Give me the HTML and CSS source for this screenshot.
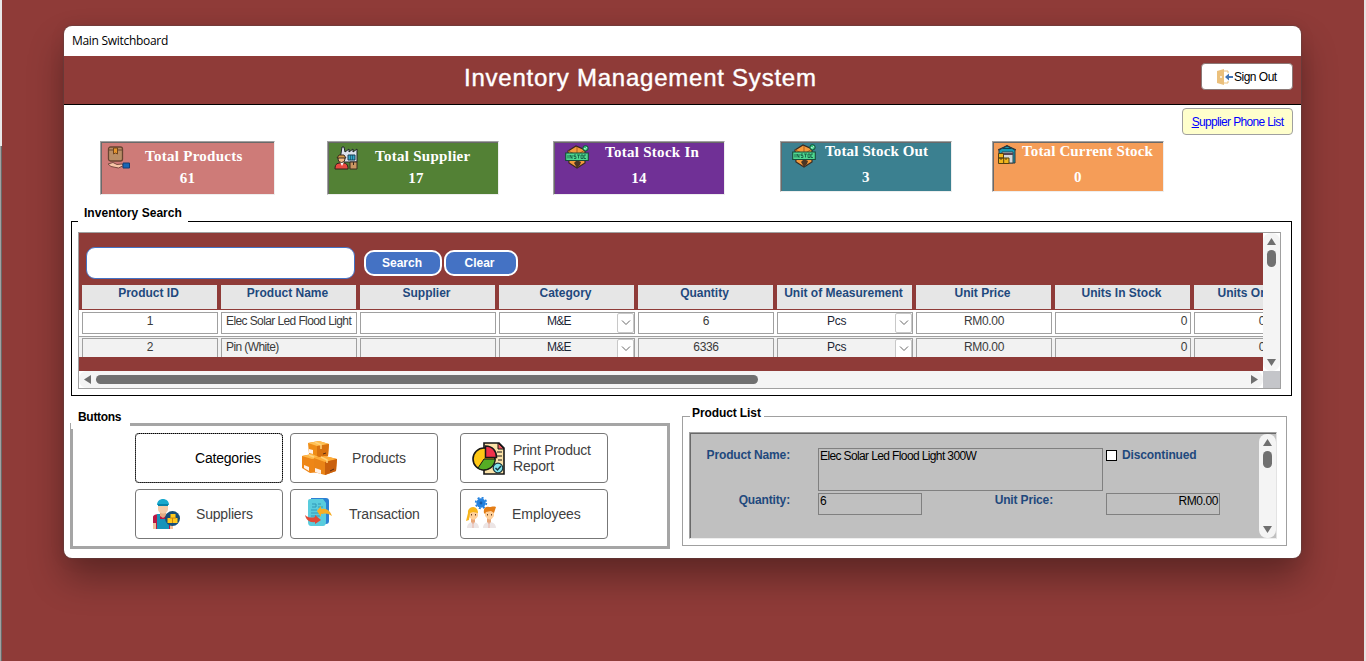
FILE: index.html
```html
<!DOCTYPE html>
<html lang="en">
<head>
<meta charset="utf-8">
<title>Main Switchboard</title>
<link rel="stylesheet" href="styles.css">
</head>
<body>
<svg class="defs" width="0" height="0">
  <symbol id="stock" viewBox="0 0 24 24">
    <path d="M3 6 11 1l9 4v13l-8 5-8-5z" fill="#f49a3c" stroke="#3a2a20" stroke-width="1.2"/>
    <path d="M3 6l9 4 8-5M12 2v6" fill="none" stroke="#a95f1e"/>
    <path d="M9 18l3-3 4 2-1 3-3 3z" fill="#4a3524"/>
    <path d="M.7 8h22.6v7.5H.7z" fill="#4fd890" stroke="#174a39" stroke-width="1.1"/>
    <path d="M3 10v3.500M5 13.500V10l2 3.500V10M11 10H9v1.600h2v1.900H9M12 10h3m-1.500 0v3.500M16 10h2v3.500h-2zM21 10h-2v3.500h2" fill="none" stroke="#12503c" stroke-width=".8"/>
    <circle cx="20.500" cy="3.300" r="2.700" fill="#2fc57b" stroke="#174a39"/>
    <path d="M19 3l1.200 1.400L22 2" fill="none" stroke="#fff" stroke-width=".7"/>
  </symbol>
</svg>
<div class="desktop">
<div class="edge-left"><i></i><b></b></div>
<main class="window">
  <div class="titlebar"><span>Main Switchboard</span></div>
  <header class="banner">
    <h1>Inventory Management System</h1>
    <button class="signout"><svg width="16" height="16" viewBox="0 0 16 16"><path d="M0 2 7 0v16l-7-2z" fill="#ebc07c"/><circle cx="4" cy="8" r=".9" fill="#fff"/><path d="M7 2h4v2M7 14h4v-2" fill="none" stroke="#ebc07c"/><path d="M16 8h-5" stroke="#3f73b5" stroke-width="2"/><path d="M8 8l4-3.500v7z" fill="#3f73b5"/></svg><span>Sign Out</span></button>
  </header>
  <div class="linkrow"><button class="phone"><span><u>S</u>upplier Phone List</span></button></div>

  <section class="cards">
    <article class="card products"><svg width="24" height="24" viewBox="0 0 24 24"><rect x="1.500" y="1" width="14" height="14" rx="2" fill="#b98e67" stroke="#684431" stroke-width="1.300"/><path d="M2 4h13" stroke="#684431"/><path d="M6.500 2h4v6l-2-1-2 1z" fill="#e5962e" stroke="#70451d"/><path d="M1 18l5-1.500 4 2 5-.5 1.500 1.500-5 2.500L4 20.500z" fill="#f7c5a6" stroke="#7a4b42"/><path d="M16 17h6.500v5H16z" fill="#1766b5" stroke="#173d72"/></svg><h2>Total Products</h2><p>61</p></article>
    <article class="card supplier"><svg width="24" height="24" viewBox="0 0 24 24"><path d="M6 14l2-13h2l1 5 4-3v3l4-3v3l4-3v13H7z" fill="#dce2ec" stroke="#20242b"/><path d="M14 9h7v5h-7z" fill="#33a7c9" stroke="#163f54"/><path d="M16.500 9v5m2-5v5" stroke="#163f54" stroke-width=".6"/><path d="M1 23c0-6 3-6 7-6s6 1 6 6z" fill="#e84b41" stroke="#30201c"/><path d="M6 16l2 4 2-4z" fill="#fff"/><circle cx="7.500" cy="13" r="3.500" fill="#f2bd86" stroke="#3b2b20"/><path d="M3 12h9l-2-3H5z" fill="#d49a48" stroke="#3b2b20"/><path d="M16 16h7v7h-7z" fill="#c99562" stroke="#3b2b20"/><path d="M19.500 16v3" stroke="#3b2b20"/></svg><h2>Total Supplier</h2><p>17</p></article>
    <article class="card stockin"><svg width="24" height="24"><use href="#stock"/></svg><h2>Total Stock In</h2><p>14</p></article>
    <article class="card stockout"><svg width="24" height="24"><use href="#stock"/></svg><h2>Total Stock Out</h2><p>3</p></article>
    <article class="card current"><svg width="18" height="19" viewBox="0 0 18 19"><path d="M1 5l8-4.500L17 5v13H1z" fill="#179bb5" stroke="#2b3840"/><path d="M0 5 9 1l9 4" fill="none" stroke="#2b3840" stroke-width="1.300"/><path d="M5 3.500h8" stroke="#103f50"/><path d="M4 7h11v11H4z" fill="#d6d9da" stroke="#394548"/><path d="M5 9h10" stroke="#545" stroke-width="2"/><path d="M.5 13h10.500v5.500H.5zM.5 8.500h5V13h-5z" fill="#f1b51d" stroke="#55400f"/><path d="M5.700 13v5.500M3 13v2m5-2v2" stroke="#55400f"/></svg><h2>Total Current Stock</h2><p>0</p></article>
  </section>

  <section class="frame search-frame">
    <span class="legend">Inventory Search</span>
    <div class="subform">
      <div class="sheet">
        <div class="tools"><input type="text" aria-label="Search text"><button class="pill p1">Search</button><button class="pill p2">Clear</button></div>
        <div class="grid heads"><b>Product ID</b><b>Product Name</b><b>Supplier</b><b>Category</b><b>Quantity</b><b>Unit of Measurement</b><b>Unit Price</b><b>Units In Stock</b><b>Units On Order</b></div>
        <div class="grid row"><span>1</span><span class="name">Elec Solar Led Flood Light</span><span></span><span class="combo">M&amp;E<i><svg width="10" height="6"><path d="M1 .5l4 4 4-4"/></svg></i></span><span>6</span><span class="combo">Pcs<i><svg width="10" height="6"><path d="M1 .5l4 4 4-4"/></svg></i></span><span class="price">RM0.00</span><span class="num">0</span><span class="cut">0</span></div>
        <div class="grid row alt"><span>2</span><span class="name">Pin (White)</span><span></span><span class="combo">M&amp;E<i><svg width="10" height="6"><path d="M1 .5l4 4 4-4"/></svg></i></span><span>6336</span><span class="combo">Pcs<i><svg width="10" height="6"><path d="M1 .5l4 4 4-4"/></svg></i></span><span class="price">RM0.00</span><span class="num">0</span><span class="cut">0</span></div>
      </div>
      <div class="vbar"><svg class="arrow" width="9" height="7"><path d="M4.500 0 9 7H0z"/></svg><div class="vthumb"></div><svg class="arrow end" width="9" height="7"><path d="M0 0h9L4.500 7z"/></svg></div>
      <div class="hbar"><svg class="arrow" width="7" height="9"><path d="M7 0v9L0 4.500z"/></svg><div class="hthumb"></div><svg class="arrow end" width="7" height="9"><path d="M0 0v9l7-4.500z"/></svg></div>
      <div class="corner"></div>
    </div>
  </section>

  <div class="lower">
    <section class="frame button-frame">
      <span class="legend">Buttons</span>
      <div class="buttons">
        <button class="tile focus"><span>Categories</span></button>
        <button class="tile prod"><svg width="36" height="36" viewBox="0 0 36 36"><path d="M7 3 18 1l10 3-1 12-11 2-8-4z" fill="#ef8d17"/><path d="M7 3l9 3 12-2-10-3z" fill="#ffc052"/><path d="M16 6v12l11-2 1-12z" fill="#d8720f"/><path d="M1 16l10-2 9 4v14L9 33l-8-5z" fill="#ee8616"/><path d="M1 16l10 3 9-1-9-4z" fill="#ffb94a"/><path d="M13 18l11-2 12 3-1 12-11 4-11-3z" fill="#ea8416"/><path d="M13 18l11 4 12-3-12-3z" fill="#ffae3a"/><path d="M24 22v13l11-4 1-12z" fill="#c9600d"/><path d="M8 9l4 1v4l-4-1zM3 25l5 2v4l-5-3zM14 28l6 2v4l-6-2z" fill="#fff1e7"/><path d="M14 2l6 3v4M8 15l5 2M20 17l6 3v3" fill="none" stroke="#ffd27b" stroke-width="1.500"/><path d="M29 31l4-2M22 14l3-1" stroke="#592c15"/></svg><span>Products</span></button>
        <button class="tile print"><svg width="34" height="33" viewBox="0 0 34 33"><path d="M12 1h15l5 5v26H12z" fill="#fbe2a8" stroke="#171717" stroke-width="1.600"/><path d="M26 1v6h6z" fill="#ef5960" stroke="#171717"/><path d="M25 10h5m-5 4h5m-4 4h4" stroke="#171717"/><circle cx="12" cy="17" r="11" fill="#ffc814" stroke="#171717" stroke-width="1.600"/><path d="M12 17h11c0 8-10 14-17 9z" fill="#55ad25" stroke="#171717"/><path d="M13.500 15.500V4c7 0 11 5 11 11.500z" fill="#f0324b" stroke="#171717" stroke-width="1.500"/><circle cx="26" cy="26" r="4.800" fill="#80e4ec" stroke="#17363f" stroke-width="1.200"/><path d="M23.500 26l2 2 3.500-4" fill="none" stroke="#17363f" stroke-width="1.500"/></svg><span class="two">Print Product<br>Report</span></button>
        <button class="tile supp"><svg width="28" height="30" viewBox="0 0 28 30"><path d="M1 30V18c0-2 3-3 6-3h7c4 0 7 2 7 5v10z" fill="#ba1744"/><path d="M1 24h3v6H1zM18 25h3v5h-3z" fill="#f2c29d"/><path d="M5 15h3v5h6v-5h3v15H5z" fill="#1793ba"/><path d="M8 13h6v4l-3 2-3-2z" fill="#e5aa82"/><path d="M6 5h10v5c0 6-10 6-10 0z" fill="#f5cba7"/><path d="M5 6c0-8 12-8 12 0z" fill="#19a9cd"/><path d="M6 5h10v2H6z" fill="#0782a8"/><circle cx="20.500" cy="19.500" r="7.500" fill="#164e79"/><path d="M18.500 15h5v4h2v5h-10v-5h3z" fill="#ffc91c"/><path d="M18 19h6m-3.500 0v5" stroke="#ca8611"/></svg><span>Suppliers</span></button>
        <button class="tile trans"><svg width="27" height="29" viewBox="0 0 27 29"><path d="M6 0h15q3 0 3 3v20q0 3-3 3H8z" fill="#2b80d3"/><path d="M3 3q0-2 2-2h13l3 4v19q0 4-3 4H6q-3 0-3-4z" fill="#59ccdd"/><path d="M7 6h4v3H7m6-3h3m-3 3h5M6 12h6m-6 3h12M6 18h9" fill="none" stroke="#3298b8"/><path d="M12 13l4-5v3c5-1 9 1 11 7-4-3-7-3-11-2v3z" fill="#f7ad24"/><path d="M0 17c3 3 7 3 10 2v-2l6 5-6 4v-2C5 25 1 22 0 17z" fill="#df4a36"/></svg><span>Transaction</span></button>
        <button class="tile empl"><svg width="31" height="31" viewBox="0 0 31 31"><circle cx="15" cy="6" r="4.700" fill="#2582df"/><circle cx="15" cy="6" r="5.300" fill="none" stroke="#2582df" stroke-width="1.700" stroke-dasharray="2 2.160"/><circle cx="15" cy="6" r="1.400" fill="#185ba8"/><path d="M1 31c0-8 12-8 12 0zM17 31c0-8 13-8 13 0z" fill="#ece5e5"/><path d="M5 21h4v4l-2 2-2-2zM21 21h4v4l-2 2-2-2z" fill="#e9a676"/><path d="M3 15h9v4q-4 7-9 1zM19 14h9v5q-4 7-9 0z" fill="#ffd09a"/><path d="M2 16c-1-7 10-9 10 0l-5-1-3 1-1 7-3 1z" fill="#f7b51b"/><path d="M18 16c-1-5 2-7 5-6 3 0 4-1 7 0l-2 6-3-2-5 1-1 2z" fill="#e47d16"/><path d="M5.500 17v1.500m4-1.500v1.500m12-1.500v1.500m4-1.500v1.500" stroke="#674328"/><path d="M7 25v6m16-6v6" stroke="#e7b3a6"/></svg><span>Employees</span></button>
      </div>
    </section>
    <section class="frame product-frame">
      <span class="legend">Product List</span>
      <div class="detail">
        <div class="form">
          <label class="lab first">Product Name:</label><div class="field wide"><span>Elec Solar Led Flood Light 300W</span></div><div class="check"><i></i><b>Discontinued</b></div>
          <label class="lab">Quantity:</label><div class="field"><span>6</span></div><label class="lab unit">Unit Price:</label><div class="field money"><span>RM0.00</span></div>
        </div>
        <div class="vbar"><svg class="arrow" width="9" height="7"><path d="M4.500 0 9 7H0z"/></svg><div class="vthumb"></div><svg class="arrow end" width="9" height="7"><path d="M0 0h9L4.500 7z"/></svg></div>
      </div>
    </section>
  </div>
</main>
<div class="edge-right"></div>
</div>
</body>
</html>
```
FILE: styles.css
```css
*{box-sizing:border-box}
html,body{margin:0;height:100%}
body{background:#8f3b38;font:12px/14px "Liberation Sans",Arial,sans-serif;color:#000;overflow:hidden}
button{font:inherit;padding:0;margin:0}
svg{display:block;flex:none}
h1,h2,p{margin:0}
.defs{position:absolute}
.desktop{display:flex;height:661px;width:1366px;justify-content:space-between;align-items:flex-start}
.edge-left{width:2px;height:661px;display:flex;flex-direction:column}
.edge-left i{height:146px;background:#e9e9e9}
.edge-left b{flex:1;background:#a0a0a0;border-right:1px solid #696969}
.edge-right{width:2px;height:661px;background:#e3e3e3}
.window{width:1237px;height:532px;margin:26px 1px 0 0;background:#fff;border-radius:8px;overflow:hidden;box-shadow:0 0 1px 1px rgba(90,70,70,.45),0 20px 36px rgba(0,0,0,.33),0 2px 18px rgba(0,0,0,.06)}
.titlebar{height:30px;padding:7px 8px;font:12px/16px "Open Sans","Noto Sans",sans-serif}
.titlebar span{letter-spacing:-.3px}
.banner{height:49px;background:#8f3b38;border-bottom:1px solid #000;display:flex;justify-content:space-between;padding:7px 8px 0 400px}
h1{color:#fff;font-size:24px;font-weight:400;line-height:30px;letter-spacing:.76px;-webkit-text-stroke:.4px #fff;white-space:nowrap}
.signout{width:92px;height:27px;background:#fff;border:1px solid #8b7876;border-radius:4px;display:flex;align-items:center;padding-left:15px;white-space:nowrap}
.signout span{letter-spacing:-.5px;margin-left:1px}
.linkrow{height:36px;display:flex;justify-content:flex-end;padding:3px 8px 0 0}
.phone{width:111px;height:27px;border:1px solid #a0a0a0;border-radius:4px;background:#ffc;color:#00f;white-space:nowrap}
.phone span{letter-spacing:-.65px}

.cards{display:flex;align-items:flex-start;height:80px;padding-left:36px}
.card{width:172px;height:54px;border:1px solid;border-color:#a0a0a0 #eee #eee #a0a0a0;box-shadow:inset 1px 1px #696969;display:grid;grid-template-columns:44px 1fr;grid-template-rows:25px 1fr;color:#fff;font:bold 15px/18px "Liberation Serif",serif}
.card svg{margin:4px 0 0 6px}
.card h2{font:inherit;padding-top:5px;white-space:nowrap;letter-spacing:.28px}
.card p{grid-column:1/3;text-align:center;padding-top:2px;letter-spacing:.3px}
.products{width:175px;margin-right:52px;background:#ce7b78}
.supplier{margin-right:54px;background:#538135;grid-template-columns:47px 1fr}
.card.supplier p{padding-left:6px}
.stockin{margin-right:55px;background:#703096;grid-template-columns:51px 1fr}
.stockin svg{margin:3px 0 0 11px}
.stockout{height:51px;margin-right:40px;background:#3b8090}
.stockout svg{margin:2px 0 0 11px}
.current{height:51px;background:#f59d58;grid-template-columns:29px 1fr}
.current svg{margin:3px 0 0 5px}
.stockin h2,.stockout h2,.current h2{padding-top:1px}
.stockout h2,.current h2{padding-top:0;letter-spacing:.14px}
.stockout,.current{grid-template-rows:24px 1fr}

.frame{position:relative}
.legend{position:absolute;background:#fff;font-weight:bold;line-height:14px;letter-spacing:-.05px;white-space:nowrap}
.search-frame{margin:0 9px 0 7px;height:175px;border:1px solid #000;padding:10px 0 0 6px}
.search-frame .legend{left:6px;top:-16px;width:110px;height:17px;padding-left:6px;letter-spacing:.03px}
.subform{width:1203px;height:157px;border:1px solid #a0a0a0;display:grid;grid-template-columns:1184px 17px;grid-template-rows:138px 17px}
.sheet{background:#8f3b38;overflow:hidden}
.tools{display:flex;height:52px;padding:14px 0 0 7px}
.tools input{width:269px;height:32px;border:1px solid #4472c4;border-radius:9px;background:#fff;margin:0 9px 0 0;padding:0 8px;outline:0}
.pill{height:26px;margin-top:3px;background:#4472c4;color:#fff;border:2px solid #fff;border-radius:10px;font-weight:bold}
.p1{width:78px;margin-right:2px;padding-right:2px}
.p2{width:74px;padding-right:3px}
.grid{display:grid;grid-template-columns:repeat(9,136px);column-gap:3px;padding-left:3px;width:1300px}
.heads b{height:24px;width:135px;background:#e6e6e6;color:#1f497d;text-align:center;padding:1px 2px 0 0;white-space:nowrap}
.row{height:27px;margin-top:1px;padding-top:2px;background:#fff;border-bottom:1px solid #a0a0a0;color:#3b3b3b}
.row span{height:22px;border:1px solid #a0a0a0;text-align:center;padding-top:1px;letter-spacing:-.35px;white-space:nowrap}
.row .name{text-align:left;padding-left:4px;letter-spacing:-.6px}
.row .num{text-align:right;padding-right:3px}
.row .cut{text-align:right;padding-right:64px}
.alt{margin-top:0;height:20px;padding-top:1px;background:#f2f2f2;border:0;overflow:hidden}
.row .combo{display:flex;justify-content:space-between;padding-left:47px;color:#1c2635;letter-spacing:-.7px}
.row .combo:nth-child(6){padding-left:49px;letter-spacing:-.2px}
.combo i{width:17px;height:20px;margin-top:-1px;background:#fff;border:1px solid #c8c8c8;border-radius:2px;display:flex;justify-content:center;align-items:center}
.combo path{fill:none;stroke:#666}
.vbar,.hbar{background:#f4f4f4;border-radius:8px;display:flex;align-items:center}
.vbar{flex-direction:column;padding:5px 0 5px;width:17px;flex:none}
.hbar{padding:0 5px}
.arrow{fill:#6f6f6f}
.vthumb{width:9px;height:17px;margin-top:5px;border-radius:5px;background:#707070}
.hthumb{width:662px;height:9px;margin-left:5px;border-radius:5px;background:#707070}
.vbar .end{margin-top:auto}
.hbar .end{margin-left:auto}
.subform .vbar,.hbar{background:#f4f4f4}
.corner{background:#c4c5c9}

.lower{display:flex;align-items:flex-start;padding-left:6px}
.button-frame{width:600px;height:126px;margin:27px 12px 0 0;border:3px solid #a5a5a5}
.button-frame .legend{left:-2px;top:-17px;width:59px;height:20px;padding:1px 0 0 7px;letter-spacing:-.3px}
.buttons{display:grid;grid-template-columns:155px 170px 148px;grid-auto-rows:50px;row-gap:6px;padding:7px 0 0 62px}
.tile{width:148px;height:50px;border:1px solid #777;border-radius:4px;background:#fff;display:flex;align-items:center;color:#404040;font-size:14px;line-height:16px;text-align:left;white-space:nowrap}
.tile span{margin-top:-1px;letter-spacing:-.18px}
.focus{color:#000;border-color:#777;outline:1px dotted #000;outline-offset:-1px;padding-left:59px}
.focus span{letter-spacing:-.2px}
.prod{padding-left:10px}.prod span{margin-left:15px}
.print{padding-left:11px}.print span{margin-left:7px}
.two::first-line{letter-spacing:-.25px}
.supp{padding-left:16px}.supp span{margin-left:16px}
.trans{padding-left:14px}.trans svg{margin-top:-4px}.trans span{margin-left:17px}
.empl{padding-left:5px}.empl svg{margin-top:-3px}.tile.empl span{margin-left:15px;letter-spacing:-.05px}
.product-frame{width:605px;height:130px;margin-top:20px;border:1px solid #a0a0a0;padding:15px 0 0 6px}
.product-frame .legend{left:7px;top:-12px;width:74px;height:16px;padding:1px 0 0 2px;letter-spacing:-.1px}
.detail{width:588px;height:107px;border:1px solid;border-color:#a0a0a0 #e3e3e3 #eee #a0a0a0;box-shadow:inset 1px 1px #696969;background:#c0c0c0;padding:1px 0 0 1px;display:flex;justify-content:space-between}
.form{display:grid;grid-template-columns:127px 104px 184px 130px;grid-template-rows:43px 22px;row-gap:2px;padding-top:14px}
.lab{font-weight:bold;color:#1f497d;text-align:right;padding-right:28px;white-space:nowrap;letter-spacing:-.15px}
.lab.unit{padding-right:53px}
.field{border:1px solid #808080;padding:0 1px;white-space:nowrap;letter-spacing:-.62px}
.wide{grid-column:2/4;width:285px}
.money{width:114px;text-align:right;letter-spacing:-.4px}
.check{display:flex;color:#1f497d}
.check i{width:11px;height:11px;border:1px solid #000;background:#fff;margin:2px 5px 0 0}
.check b{letter-spacing:-.12px}
```
